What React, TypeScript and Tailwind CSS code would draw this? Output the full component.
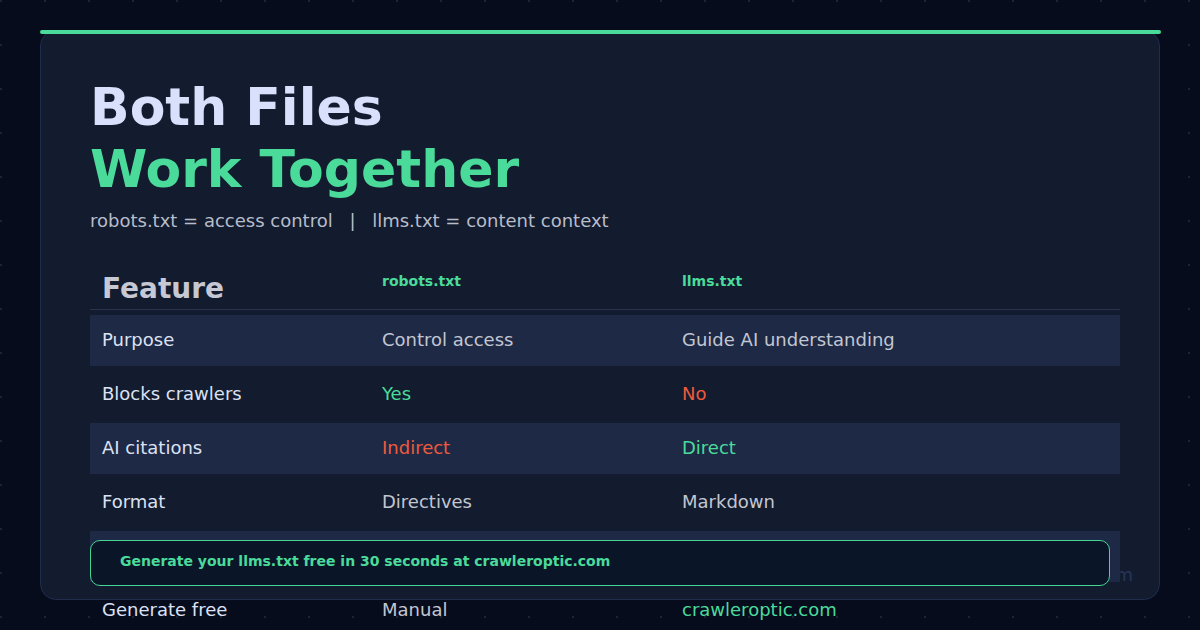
const rows = [
  { feature: "Purpose", robots: "Control access", llms: "Guide AI understanding", shaded: true },
  { feature: "Blocks crawlers", robots: "Yes", llms: "No", robotsTone: "good", llmsTone: "bad" },
  { feature: "AI citations", robots: "Indirect", llms: "Direct", robotsTone: "bad", llmsTone: "good", shaded: true },
  { feature: "Format", robots: "Directives", llms: "Markdown" },
  // this row sits under the banner
  { feature: "", robots: "", llms: "", shaded: true },
  { feature: "Generate free", robots: "Manual", llms: "crawleroptic.com", llmsTone: "good" },
];

function toneClass(tone?: string) {
  if (tone === "good") return "text-[#4adb9b]";
  if (tone === "bad") return "text-[#ee5a3c]";
  return "text-[#c2c6d1]";
}

export default function App() {
  return (
    <div
      className="w-[1200px] h-[630px] overflow-hidden bg-[#070c1d] bg-[radial-gradient(circle_at_1px_1px,#1a2339_1px,transparent_0)] bg-[size:44px_44px] px-[40px] pt-[30px]"
      style={{ fontFamily: '"DejaVu Sans", Verdana, sans-serif' }}
    >
      <div className="relative h-[570px] rounded-2xl border border-[#1f2c4c] bg-[#131b2e] pl-[49px] pr-[39px] pt-[45px]">
        <div className="absolute -left-px -right-[2px] -top-px h-[4px] rounded-full bg-[#4adb9b]" />

        <div className="absolute right-[26px] bottom-[11px] text-[18px] leading-[27px] text-[#27355a]">
          crawleroptic.com
        </div>

        <h1 className="text-[52px] leading-[1.2] font-bold">
          <span className="block text-[#d9e0fc]">Both Files</span>
          <span className="block text-[#4adb9b]">Work Together</span>
        </h1>
        <p className="mt-[6px] text-[18px] leading-[27px] text-[#b8bdca]">
          robots.txt = access control<span className="px-[11px]"> | </span>llms.txt = content context
        </p>

        <div className="relative mt-[27px]">
          <div className="grid grid-cols-[280px_300px_1fr] items-start border-b border-[#28344f] pt-3 pb-1">
            <div className="pl-3 text-[28px] leading-[32px] font-bold text-[#c6c8d4]">Feature</div>
            <div className="pl-3 text-[14px] leading-[16px] font-bold text-[#4adb9b]">robots.txt</div>
            <div className="pl-3 text-[14px] leading-[16px] font-bold text-[#4adb9b]">llms.txt</div>
          </div>
          <div className="mt-[5px] flex flex-col gap-[3px]">
            {rows.map((row, i) => (
              <div
                key={i}
                className={
                  "grid h-[51px] grid-cols-[280px_300px_1fr] items-center pb-[2px] text-[18px] " +
                  (row.shaded ? "bg-[#1e2946]" : "")
                }
              >
                <div className="pl-3 text-[#dce2f4]">{row.feature}</div>
                <div className={"pl-3 " + toneClass(row.robotsTone)}>{row.robots}</div>
                <div className={"pl-3 " + toneClass(row.llmsTone)}>{row.llms}</div>
              </div>
            ))}
          </div>
        </div>

        <div className="absolute left-[49px] right-[49px] bottom-[13px] z-10 flex h-[46px] items-center rounded-[10px] border border-[#45d595] bg-[#0a1628] px-[29px] pb-[4px]">
          <span className="text-[14px] font-bold text-[#4adb9b]">
            Generate your llms.txt free in 30 seconds at crawleroptic.com
          </span>
        </div>
      </div>
    </div>
  );
}
